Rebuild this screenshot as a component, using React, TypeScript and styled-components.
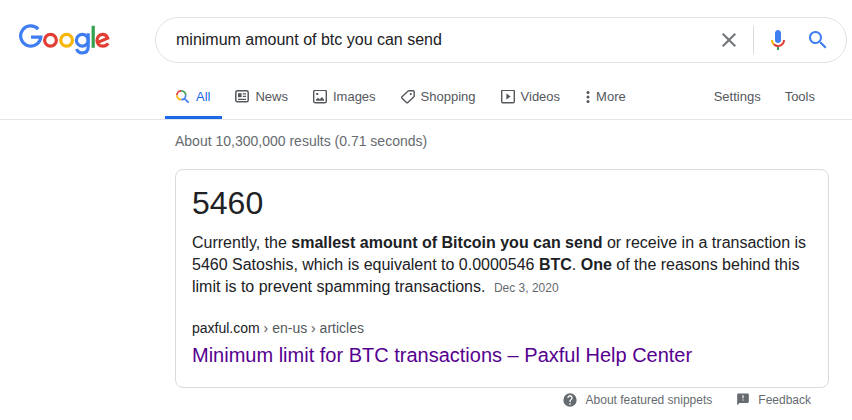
import React from "react";
import styled, { createGlobalStyle } from "styled-components";

const GlobalStyle = createGlobalStyle`
  * { box-sizing: border-box; }
  body {
    margin: 0;
    background: #fff;
    color: #202124;
    font-family: "Liberation Sans", Arial, sans-serif;
  }
  svg { display: block; flex: none; }
`;

const Header = styled.header`
  border-bottom: 1px solid #e4e5e7;
`;

const SearchRow = styled.div`
  display: grid;
  grid-template-columns: 155px minmax(0, 692px);
  align-items: center;
  padding: 17px 5px 0 0;
`;

const LogoLink = styled.a`
  padding-left: 19px;
`;

const SearchForm = styled.form`
  display: flex;
  align-items: center;
  height: 46px;
  padding: 0 16px 0 20px;
  border: 1px solid #dfe1e5;
  border-radius: 23px;
`;

const SearchInput = styled.input`
  flex: 1;
  min-width: 0;
  padding: 0;
  border: 0;
  outline: 0;
  background: transparent;
  color: #202124;
  font: 16px/24px "Liberation Sans", Arial, sans-serif;
`;

const IconButton = styled.button`
  display: flex;
  padding: 0;
  border: 0;
  background: none;
  cursor: pointer;
`;

const Divider = styled.span`
  width: 1px;
  height: 28px;
  margin: 0 12px;
  background: #dadce0;
`;

const MicButton = styled(IconButton)`
  margin-right: 16px;
`;

const Nav = styled.nav`
  display: flex;
  justify-content: space-between;
  max-width: 852px;
  padding: 12px 27px 0 165px;
  font-size: 13px;
  line-height: 16px;
`;

const NavGroup = styled.div<{ $gap: number }>`
  display: flex;
  gap: ${(p) => p.$gap}px;
`;

const Tab = styled.a<{ $active?: boolean }>`
  display: flex;
  align-items: center;
  gap: 6px;
  height: 44px;
  padding: 3px 12px 0 10px;
  border-bottom: 3px solid ${(p) => (p.$active ? "#1b69e6" : "transparent")};
  color: ${(p) => (p.$active ? "#1b69e6" : "#54585d")};
  text-decoration: none;
  white-space: nowrap;
`;

const MoreButton = styled.button`
  display: flex;
  align-items: center;
  gap: 6px;
  height: 44px;
  padding: 0 11px;
  border: 0;
  background: none;
  color: #54585d;
  font: inherit;
  cursor: pointer;
`;

const ToolButton = styled(MoreButton)`
  padding: 0 10px;
`;

const Main = styled.main`
  max-width: 829px;
  padding-left: 175px;
`;

const Stats = styled.p`
  margin: 0;
  padding: 12px 0 19px;
  color: #666b70;
  font-size: 14px;
  line-height: 18px;
`;

const Card = styled.section`
  padding: 12px 16px 19px;
  border: 1px solid #dadce0;
  border-radius: 8px;
`;

const Answer = styled.h2`
  margin: 0 0 8px;
  font-size: 32px;
  font-weight: 400;
  line-height: 42px;
`;

const Snippet = styled.p`
  margin: 0 0 19px;
  font-size: 16px;
  line-height: 22px;
`;

const DateLabel = styled.span`
  margin-left: 4px;
  color: #666b70;
  font-size: 12px;
`;

const ResultLink = styled.a`
  display: block;
  text-decoration: none;
`;

const Cite = styled.cite`
  display: block;
  color: #202124;
  font-size: 14px;
  font-style: normal;
  line-height: 20px;
`;

const Crumbs = styled.span`
  color: #54585d;
`;

const Title = styled.h3`
  margin: 4px 0 0;
  color: #560090;
  font-size: 20px;
  font-weight: 400;
  line-height: 26px;
`;

const CardFooter = styled.footer`
  display: flex;
  justify-content: flex-end;
  gap: 24px;
  padding: 4px 18px 0 0;
`;

const FooterLink = styled.a`
  display: flex;
  align-items: center;
  gap: 8px;
  color: #666b70;
  font-size: 12px;
  line-height: 16px;
  text-decoration: none;
`;

const Logo = () => (
  <svg width="92" height="32" viewBox="0 0 92 32" fill="none" strokeWidth="3.2" role="img" aria-label="Google">
    <path stroke="#3e7df2" d="M19.2 5.1A10.1 10.1 0 1 0 21.8 13.2H12" />
    <circle stroke="#e33e33" cx="31.5" cy="16.3" r="5.9" />
    <circle stroke="#f8b60b" cx="47.6" cy="16.3" r="5.9" />
    <g stroke="#3e7df2">
      <circle cx="63.3" cy="16.3" r="5.9" />
      <path d="M69.2 9.3V22.5C69.2 26.8 67 28.9 63.3 28.9C60.5 28.9 58.4 27.3 57.6 25" />
    </g>
    <path stroke="#34a04f" d="M74.2 1.8V23.8" />
    <path stroke="#e33e33" d="M78.3 18.6L88.7 14.2C87.9 11.8 86.2 10.4 83.8 10.4A5.8 5.9 0 0 0 78 16.4C78 19.9 80.4 22.2 83.8 22.2C86.2 22.2 87.9 21.2 89.1 19.4" />
  </svg>
);

const Clear = () => (
  <svg width="24" height="24" viewBox="0 0 24 24" fill="#70757a">
    <path d="M19 6.41L17.59 5 12 10.59 6.41 5 5 6.41 10.59 12 5 17.59 6.41 19 12 13.41 17.59 19 19 17.59 13.41 12z" />
  </svg>
);

const Mic = () => (
  <svg width="24" height="24" viewBox="0 0 24 24">
    <path fill="#3e7df2" d="M12 15c1.7 0 3-1.4 3-3.1V5.1C15 3.4 13.7 2 12 2S9 3.4 9 5.1v6.8C9 13.6 10.3 15 12 15z" />
    <path fill="#34a04f" d="M11 18.9h2V22h-2z" />
    <path fill="#f8b60b" d="M7 12H5c0 1.9.8 3.7 2.05 4.95l1.4-1.4C7.6 14.7 7 13.4 7 12z" />
    <path fill="#e33e33" d="M12 17c-1.4 0-2.7-.6-3.55-1.45l-1.4 1.4C8.3 18.2 10 19 12 19c3.9 0 7-3.1 7-7h-2c0 2.8-2.2 5-5 5z" />
  </svg>
);

const Search = () => (
  <svg width="24" height="24" viewBox="0 0 24 24" fill="#3e7df2">
    <path d="M15.5 14h-.8l-.3-.3A6.5 6.5 0 1 0 13.7 14.4l.3.3v.8l5 5 1.5-1.5-5-5zm-6 0a4.5 4.5 0 1 1 0-9 4.5 4.5 0 0 1 0 9z" />
  </svg>
);

const AllIcon = () => (
  <svg width="15" height="15" viewBox="0 0 15 15" fill="none" strokeWidth="1.7">
    <path stroke="#e33e33" d="M1.9 5.2A4.4 4.4 0 0 1 6.3 .9" />
    <path stroke="#34a04f" d="M6.3 .9A4.4 4.4 0 0 1 10.7 5.3" />
    <path stroke="#f8b60b" d="M6.3 9.7A4.4 4.4 0 0 1 1.9 5.2" />
    <path stroke="#3e7df2" d="M10.7 5.3A4.4 4.4 0 0 1 6.3 9.7M9.2 8.3L13.6 12.7" />
  </svg>
);

const NewsIcon = () => (
  <svg width="14" height="14" viewBox="0 0 14 14" fill="none" stroke="#54585d" strokeWidth="1.5">
    <rect x=".8" y=".8" width="12.4" height="11" rx="1.6" />
    <path strokeWidth="1.2" d="M3 9.3h8M7.8 3.8H11M7.8 6.4H11" />
    <path fill="#54585d" stroke="none" d="M3 3.2h3.6v4H3z" />
  </svg>
);

const ImagesIcon = () => (
  <svg width="14" height="14" viewBox="0 0 14 14" fill="none" stroke="#54585d" strokeWidth="1.4">
    <rect x=".7" y=".2" width="12.6" height="12.6" rx="1.6" />
    <path fill="#54585d" stroke="none" d="M3 10.7V9.4L5 7.8l1.7 1.5L9 7l2 2.4v1.3zM3.2 3h2v2h-2z" />
  </svg>
);

const ShoppingIcon = () => (
  <svg width="14" height="14" viewBox="0 0 14 14" fill="none" stroke="#54585d" strokeWidth="1.4" strokeLinejoin="round">
    <path d="M7.8.7H12a1.2 1.2 0 0 1 1.2 1.2v4.2a1 1 0 0 1-.3.7l-6 5.7a1 1 0 0 1-1.4 0L1 8.2a1 1 0 0 1 0-1.4L7.1 1a1 1 0 0 1 .7-.3z" />
    <circle cx="9.8" cy="4.1" r="1.1" fill="#54585d" stroke="none" />
  </svg>
);

const VideosIcon = () => (
  <svg width="14" height="14" viewBox="0 0 14 14" fill="none" stroke="#54585d" strokeWidth="1.4">
    <rect x=".7" y=".2" width="12.6" height="12.6" rx="1.2" />
    <path fill="#54585d" stroke="none" d="M5.4 3.6v5.8l4.2-2.9z" />
  </svg>
);

const MoreIcon = () => (
  <svg width="4" height="13" viewBox="0 0 4 13" fill="#54585d">
    <circle cx="2" cy="1.6" r="1.5" />
    <circle cx="2" cy="6" r="1.5" />
    <circle cx="2" cy="10.4" r="1.5" />
  </svg>
);

const HelpIcon = () => (
  <svg width="16" height="16" viewBox="0 0 24 24" fill="#666b70">
    <path d="M12 2a10 10 0 1 0 0 20 10 10 0 0 0 0-20zm1 17h-2v-2h2v2zm2.07-7.75l-.9.92C13.45 12.9 13 13.5 13 15h-2v-.5c0-1.1.45-2.1 1.17-2.83l1.24-1.26A2 2 0 1 0 10 9H8a4 4 0 1 1 7.07 2.25z" />
  </svg>
);

const FeedbackIcon = () => (
  <svg width="14" height="14" viewBox="0 0 24 24" fill="#666b70">
    <path d="M20 1H4c-1.1 0-2 .9-2 2v18l4-4h14c1.1 0 2-.9 2-2V3c0-1.1-.9-2-2-2zm-7 12h-2v-2h2v2zm0-4h-2V4h2v5z" />
  </svg>
);

const tabs = [
  { label: "All", Icon: AllIcon, active: true },
  { label: "News", Icon: NewsIcon },
  { label: "Images", Icon: ImagesIcon },
  { label: "Shopping", Icon: ShoppingIcon },
  { label: "Videos", Icon: VideosIcon },
];

export default function App() {
  return (
    <>
      <GlobalStyle />
      <Header>
        <SearchRow>
          <LogoLink href="#">
            <Logo />
          </LogoLink>
          <SearchForm role="search" onSubmit={(e) => e.preventDefault()}>
            <SearchInput aria-label="Search" defaultValue="minimum amount of btc you can send" />
            <IconButton type="reset" aria-label="Clear">
              <Clear />
            </IconButton>
            <Divider />
            <MicButton type="button" aria-label="Search by voice">
              <Mic />
            </MicButton>
            <IconButton type="submit" aria-label="Search">
              <Search />
            </IconButton>
          </SearchForm>
        </SearchRow>
        <Nav>
          <NavGroup $gap={3}>
            {tabs.map(({ label, Icon, active }) => (
              <Tab key={label} href="#" $active={active} aria-current={active ? "page" : undefined}>
                <Icon />
                {label}
              </Tab>
            ))}
            <MoreButton type="button">
              <MoreIcon />
              More
            </MoreButton>
          </NavGroup>
          <NavGroup $gap={4}>
            <ToolButton type="button">Settings</ToolButton>
            <ToolButton type="button">Tools</ToolButton>
          </NavGroup>
        </Nav>
      </Header>
      <Main>
        <Stats>About 10,300,000 results (0.71 seconds)</Stats>
        <Card>
          <Answer>5460</Answer>
          <Snippet>
            Currently, the <b>smallest amount of Bitcoin you can send</b> or receive in a transaction is 5460
            Satoshis, which is equivalent to 0.0000546 <b>BTC</b>. <b>One</b> of the reasons behind this limit is
            to prevent spamming transactions. <DateLabel>Dec 3, 2020</DateLabel>
          </Snippet>
          <ResultLink href="#">
            <Cite>
              paxful.com<Crumbs> › en-us › articles</Crumbs>
            </Cite>
            <Title>Minimum limit for BTC transactions – Paxful Help Center</Title>
          </ResultLink>
        </Card>
        <CardFooter>
          <FooterLink href="#">
            <HelpIcon />
            About featured snippets
          </FooterLink>
          <FooterLink href="#">
            <FeedbackIcon />
            Feedback
          </FooterLink>
        </CardFooter>
      </Main>
    </>
  );
}
